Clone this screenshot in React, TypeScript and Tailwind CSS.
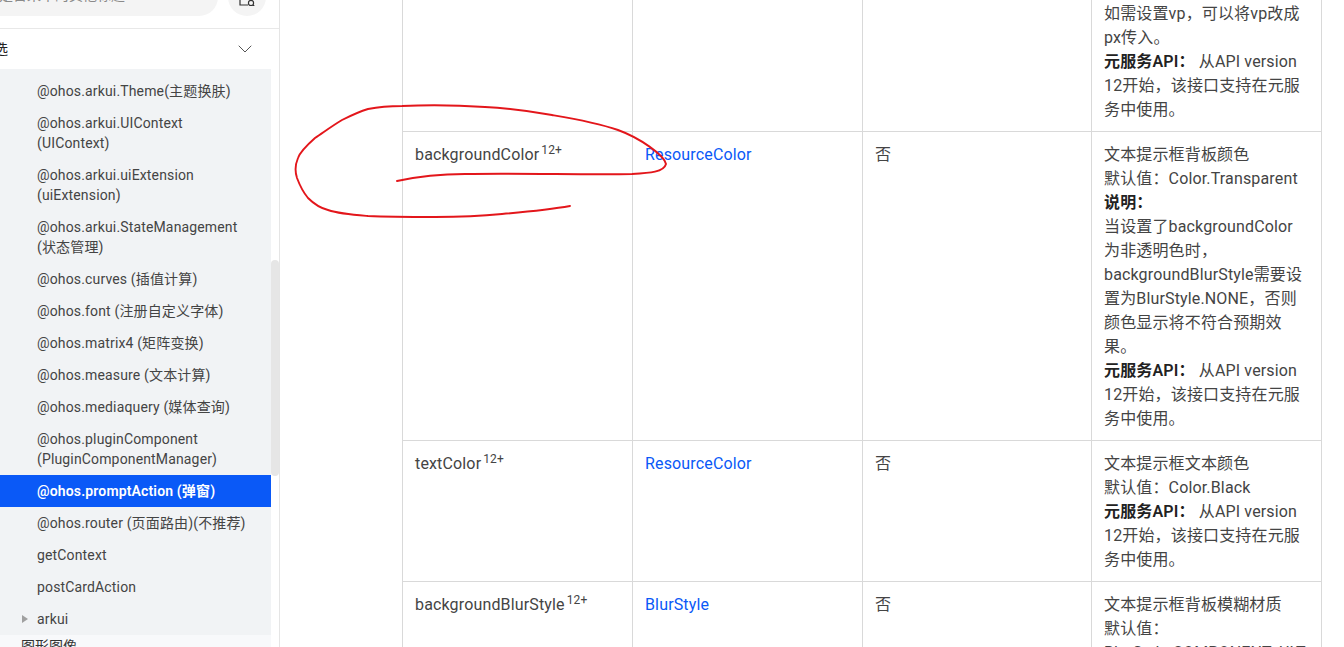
import { ChevronDown } from "lucide-react";

const font = "font-['Roboto','Noto_Sans_CJK_SC',sans-serif]";

const navItems = [
  { lines: ["@ohos.arkui.Theme(主题换肤)"] },
  { lines: ["@ohos.arkui.UIContext", "(UIContext)"] },
  { lines: ["@ohos.arkui.uiExtension", "(uiExtension)"] },
  { lines: ["@ohos.arkui.StateManagement", "(状态管理)"] },
  { lines: ["@ohos.curves (插值计算)"] },
  { lines: ["@ohos.font (注册自定义字体)"] },
  { lines: ["@ohos.matrix4 (矩阵变换)"] },
  { lines: ["@ohos.measure (文本计算)"] },
  { lines: ["@ohos.mediaquery (媒体查询)"] },
  { lines: ["@ohos.pluginComponent", "(PluginComponentManager)"] },
  { lines: ["@ohos.promptAction (弹窗)"], active: true },
  { lines: ["@ohos.router (页面路由)(不推荐)"] },
  { lines: ["getContext"] },
  { lines: ["postCardAction"] },
];

function Sidebar() {
  return (
    <aside className="w-[280px] shrink-0 h-full border-r border-[#e5e5e5] flex flex-col overflow-hidden">
      {/* search, scrolled mostly out of view */}
      <div className="h-[29px] shrink-0 border-b border-[#e8e8e8] flex items-end gap-[10px] pb-3 pr-[13px]">
        <div className="w-[218px] h-[38px] shrink-0 rounded-r-full bg-[#f4f4f4] text-[14px] text-[#8a8a8a] flex items-end pb-[10px] overflow-hidden whitespace-nowrap">
          <span className="-ml-[1px]">是否来中的其他标题</span>
        </div>
        <div className="w-[38px] h-[38px] shrink-0 rounded-full bg-[#f4f4f4] flex items-end justify-center pb-[10px]">
          <svg width="18" height="18" viewBox="0 0 18 18" fill="none" stroke="#333" strokeWidth="1.2">
            <path d="M2 2v15h8" />
            <circle cx="13" cy="15" r="2.6" />
            <path d="M15 17l1.5 1.5" />
          </svg>
        </div>
      </div>

      <div className="h-[40px] shrink-0 flex items-center justify-between pr-[22px] text-[14px] text-[#222]">
        <span className="-ml-[6px]">选</span>
        <ChevronDown className="w-[24px] h-[24px] text-[#555]" strokeWidth={1} />
      </div>

      <div className="flex-1 flex min-h-0">
        <div className="w-[271px] shrink-0 flex flex-col">
          <nav className="bg-[#f1f3f5] pt-[6px] text-[14px] leading-[20px] text-[#444] tracking-[0.15px]">
            {navItems.map((item) => (
              <div
                key={item.lines[0]}
                className={
                  item.active
                    ? "pl-[37px] py-[6px] bg-[#0a59f7] text-white font-semibold"
                    : "pl-[37px] py-[6px]"
                }
              >
                {item.lines.map((l) => (
                  <div key={l}>{l}</div>
                ))}
              </div>
            ))}
            <div className="pl-[22px] py-[6px] flex items-center">
              <span className="w-0 h-0 border-y-[4px] border-y-transparent border-l-[6px] border-l-[#a0a0a0] mr-[9px]" />
              arkui
            </div>
          </nav>
          <div className="flex-1 bg-[#f8f9fb] pl-[21px] pt-[1px] text-[14px] leading-[20px] text-[#333]">图形图像</div>
        </div>
        {/* scrollbar */}
        <div className="w-[8px] shrink-0 pt-[191px]">
          <div className="w-[8px] h-[216px] bg-[#e6e6e6] rounded-[4px]" />
        </div>
      </div>
    </aside>
  );
}

const link = "text-[#0a59f7]";
const th = "font-semibold text-[#222]";

function Sup({ children }: { children: string }) {
  return <sup className="text-[12px] leading-none align-baseline relative -top-[6px] ml-[2px]">{children}</sup>;
}

const cell = "border border-[#d9d9d9] align-top px-3 pt-[11px] pb-[9px] break-words";

function Rows() {
  return (
    <tbody>
      <tr>
        <td className={cell}></td>
        <td className={cell}></td>
        <td className={cell}></td>
        <td className={cell}>
          如需设置vp，可以将vp改成px传入。
          <br />
          <b className={th}>元服务API：</b> 从API version 12开始，该接口支持在元服务中使用。
        </td>
      </tr>
      <tr>
        <td className={cell}>
          backgroundColor<Sup>12+</Sup>
        </td>
        <td className={cell}>
          <span className={link}>ResourceColor</span>
        </td>
        <td className={cell}>否</td>
        <td className={cell}>
          文本提示框背板颜色
          <br />
          默认值：Color.Transparent
          <br />
          <b className={th}>说明：</b>
          <br />
          当设置了backgroundColor为非透明色时，backgroundBlurStyle需要设置为BlurStyle.NONE，否则颜色显示将不符合预期效果。
          <br />
          <b className={th}>元服务API：</b> 从API version 12开始，该接口支持在元服务中使用。
        </td>
      </tr>
      <tr>
        <td className={cell}>
          textColor<Sup>12+</Sup>
        </td>
        <td className={cell}>
          <span className={link}>ResourceColor</span>
        </td>
        <td className={cell}>否</td>
        <td className={cell}>
          文本提示框文本颜色
          <br />
          默认值：Color.Black
          <br />
          <b className={th}>元服务API：</b> 从API version 12开始，该接口支持在元服务中使用。
        </td>
      </tr>
      <tr>
        <td className={cell}>
          backgroundBlurStyle<Sup>12+</Sup>
        </td>
        <td className={cell}>
          <span className={link}>BlurStyle</span>
        </td>
        <td className={cell}>否</td>
        <td className={cell}>
          文本提示框背板模糊材质
          <br />
          默认值：
          <br />
          BlurStyle.COMPONENT_ULTRA_THICK
        </td>
      </tr>
    </tbody>
  );
}

export default function App() {
  return (
    <main className={`relative w-[1344px] h-[647px] overflow-hidden bg-white flex ${font}`}>
      <Sidebar />
      <section className="flex-1 pl-[122px] -mt-[10px]">
        <table className="table-fixed border-collapse w-[919px] text-[16px] leading-[24px] text-[#444] tracking-[0.15px]">
          <colgroup>
            <col className="w-[230px]" />
            <col className="w-[230px]" />
            <col className="w-[229px]" />
            <col className="w-[230px]" />
          </colgroup>
          <Rows />
        </table>
      </section>

      {/* red pen annotation */}
      <svg className="absolute inset-0 pointer-events-none" width="1344" height="647" fill="none">
        <path
          d="M397 181C420 176 440 174 465 174C520 173 590 175 632 174C650 173 664 172 666 164C664 155 640 138 618 130C595 122 570 118 552 115C530 111 505 108 485 107C455 105 425 105 402 106C390 106 378 107 368 109C358 112 350 116 342 120C332 126 324 132 315 138C306 146 300 152 298 158C295 165 295 172 297 178C300 186 303 192 308 198C314 204 320 208 328 210C340 214 355 215 368 216C390 217 412 217 435 217C460 217 482 216 502 214C525 212 548 210 570 206"
          stroke="#e3161b"
          strokeWidth="1.9"
          strokeLinecap="round"
        />
      </svg>
    </main>
  );
}
